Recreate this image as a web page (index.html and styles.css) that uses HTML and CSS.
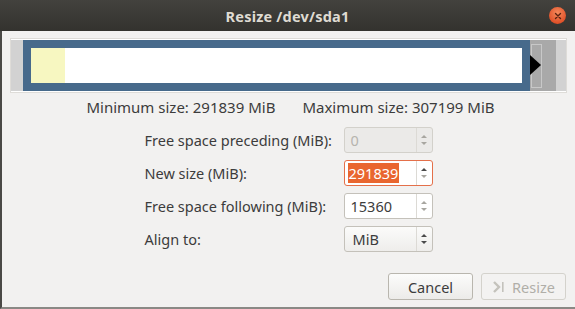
FILE: index.html
```html
<!DOCTYPE html>
<html>
<head>
<meta charset="utf-8">
<link rel="stylesheet" href="styles.css">
</head>
<body>
<div class="window">
  <div class="titlebar">
    <span class="title">Resize /dev/sda1</span>
    <span class="close"><svg width="8" height="8" viewBox="0 0 8 8"><path d="M1.5 1.5 L6.5 6.5 M6.5 1.5 L1.5 6.5" stroke="#5a2210" stroke-width="1.4" stroke-linecap="round"/></svg></span>
  </div>
  <div class="content">
    <div class="bar">
      <div class="before"></div>
      <div class="part">
        <div class="inner"><div class="used"></div></div>
      </div>
      <div class="after">
        <div class="handle"></div>
        <svg class="arrow" width="12" height="20" viewBox="0 0 12 20"><path d="M0 0 L11 10 L0 20 Z" fill="#000"/></svg>
      </div>
      <div class="beyond"></div>
    </div>
    <div class="limits">
      <span>Minimum size: 291839 MiB</span>
      <span>Maximum size: 307199 MiB</span>
    </div>
    <div class="form">
      <label>Free space preceding (MiB):</label>
      <div class="spin disabled"><span class="entry">0</span><span class="arrows"><i class="up"></i><i class="down"></i></span></div>
      <label>New size (MiB):</label>
      <div class="spin focus"><span class="entry"><span class="sel">291839</span></span><span class="arrows"><i class="up dark"></i><i class="down"></i></span></div>
      <label>Free space following (MiB):</label>
      <div class="spin"><span class="entry">15360</span><span class="arrows"><i class="up"></i><i class="down"></i></span></div>
      <label>Align to:</label>
      <div class="spin combo"><span class="entry">MiB</span><span class="arrows"><i class="up dark"></i><i class="down dark"></i></span></div>
    </div>
    <div class="buttons">
      <button class="btn">Cancel</button>
      <button class="btn off"><svg width="14" height="14" viewBox="0 0 14 14"><path d="M2 2 L7 7 L2 12" fill="none" stroke="#c4c2bc" stroke-width="2.4"/><rect x="10" y="2" width="1.6" height="10" fill="#c4c2bc"/></svg>Resize</button>
    </div>
  </div>
</div>
</body>
</html>
```
FILE: styles.css
```css
html, body { margin: 0; padding: 0; }
body { width: 575px; height: 309px; overflow: hidden; font-family: "Noto Sans", "DejaVu Sans", sans-serif; background: #f2f1f0; }
.window { width: 575px; height: 309px; box-sizing: border-box; border-left: 2px solid #4a4946; border-bottom: 2px solid #8a8985; display: flex; flex-direction: column; background: #f2f1f0; }
.titlebar { height: 31px; flex: none; position: relative; background: linear-gradient(#43423e, #33322e); display: flex; align-items: center; justify-content: center; margin-left: -2px; }
.title { color: #dfdbd2; font-weight: bold; font-size: 14.5px; letter-spacing: 0.2px; }
.close { position: absolute; right: 9px; top: 7px; width: 17px; height: 17px; border-radius: 50%; background: radial-gradient(circle at 50% 35%, #f58a5c, #e0522a 70%, #c9461f); display: flex; align-items: center; justify-content: center; }
.content { flex: 1; display: flex; flex-direction: column; padding: 7px 8px 0 8px; }
.bar { height: 51px; border: 1px solid #dedcd8; padding: 1px 0; display: flex; background: #fff; margin-right: 0; }
.before { width: 12px; background: #d2d2d2; }
.part { width: 491px; border: 8px solid #476a8b; background: #fff; display: flex; }
.inner { flex: 1; display: flex; }
.used { width: 34px; background: #f7f7c1; }
.after { width: 26px; background: #a9a9a9; position: relative; }
.handle { position: absolute; left: 1px; top: 4px; width: 9px; height: 42px; border: 1px solid #c8c8c8; }
.arrow { position: absolute; left: 0; top: 15px; }
.beyond { width: 10px; background: #d2d2d2; }
.limits { display: flex; justify-content: center; gap: 27px; font-size: 15px; color: #3c3c3c; margin-top: 4px; height: 19px; align-items: center; padding-left: 4px; }
.form { display: grid; grid-template-columns: 199px 89px; grid-auto-rows: 26px; row-gap: 7px; justify-content: center; margin-top: 11px; font-size: 14.5px; color: #3c3c3c; }
.form label { display: flex; align-items: center; }
.spin { display: flex; border: 1px solid #c4c1ba; border-radius: 3px; background: #fff; box-sizing: border-box; }
.spin .entry { flex: 1; display: flex; align-items: center; padding-left: 6px; border-right: 1px solid #dcdad5; }
.spin .arrows { width: 15px; display: flex; flex-direction: column; align-items: center; justify-content: center; gap: 4px; }
.arrows i { display: block; width: 0; height: 0; border-left: 3px solid transparent; border-right: 3px solid transparent; }
.arrows .up { border-bottom: 3px solid #a8a6a0; }
.arrows .down { border-top: 3px solid #a8a6a0; }
.arrows .up.dark { border-bottom-color: #4a4a4a; }
.arrows .down.dark { border-top-color: #4a4a4a; }
.spin.disabled { background: #ebeae8; border-color: #d3d1cb; }
.spin.disabled .entry { color: #b6b4ae; }
.spin.focus { border-color: #e4704a; }
.spin.focus .entry { padding-left: 3px; }
.sel { background: #e9662f; color: #fff; padding: 0 1px; }
.spin.combo { background: linear-gradient(#fbfbfa, #eeedeb); }
.spin.combo .entry { padding-left: 8px; }
.buttons { display: flex; justify-content: flex-end; gap: 8px; margin-top: 21px; padding-right: 1px; }
.btn { height: 27px; width: 85px; font-family: inherit; font-size: 14.5px; color: #3c3c3c; border: 1px solid #b9b6ae; border-radius: 3px; background: linear-gradient(#fcfcfb, #ecebe9); display: flex; align-items: center; justify-content: center; gap: 6px; padding: 0; }
.btn.off { color: #b0aea8; border-color: #d4d2cc; background: #f3f2f1; }
```
